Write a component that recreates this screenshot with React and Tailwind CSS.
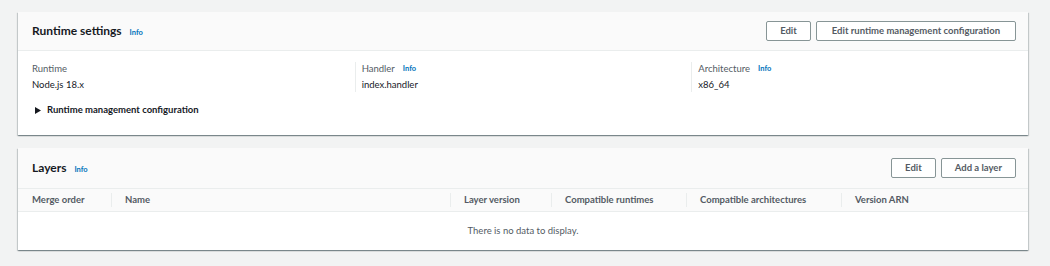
import React from 'react';

const font = { fontFamily: 'Lato, "Open Sans", sans-serif' };

const Info = () => (
  <span className="ml-[8px] text-[7.5px] font-bold text-[#0073bb]">Info</span>
);

const Btn = ({ children, wide }) => (
  <button
    className={`h-[20px] rounded-[2px] border border-[#879596] bg-white ${wide ? 'px-[15px]' : 'px-[13px]'} text-[9.5px] font-bold text-[#545b64]`}
  >
    {children}
  </button>
);

const Field = ({ label, value, info, first }) => (
  <div className={first ? 'pl-[14px]' : 'border-l border-[#eaeded] pl-[6px]'}>
    <div className="flex items-center text-[9.5px] leading-[14px] text-[#545b64]">
      {label}
      {info && <Info />}
    </div>
    <div className="mt-[2px] text-[9.5px] leading-[14px] text-[#16191f]">{value}</div>
  </div>
);

const columns = [
  { name: 'Merge order', w: 'w-[93px]' },
  { name: 'Name', w: 'w-[339px]' },
  { name: 'Layer version', w: 'w-[101px]' },
  { name: 'Compatible runtimes', w: 'w-[135px]' },
  { name: 'Compatible architectures', w: 'w-[155px]' },
  { name: 'Version ARN', w: 'flex-1' },
];

const card =
  'bg-white shadow-[0_1px_1px_0_rgba(0,28,36,0.3),1px_1px_1px_0_rgba(0,28,36,0.15),-1px_1px_1px_0_rgba(0,28,36,0.15)]';

export default function App() {
  return (
    <div className="min-h-[266px] bg-[#f2f3f3] pl-[18px] pr-[22px] pt-[12px]" style={font}>
      {/* Runtime settings */}
      <div className={card}>
        <div className="flex h-[39px] items-center justify-between border-b border-[#eaeded] bg-[#fafafa] pl-[14px] pr-[12px]">
          <div className="flex items-baseline">
            <span className="text-[12px] font-bold text-[#16191f]">Runtime settings</span>
            <Info />
          </div>
          <div className="flex gap-[5px]">
            <Btn>Edit</Btn>
            <Btn wide>Edit runtime management configuration</Btn>
          </div>
        </div>
        <div className="pt-[7px] pb-[18px]">
          <div className="grid grid-cols-3 py-[4px]">
            <Field first label="Runtime" value="Node.js 18.x" />
            <Field label="Handler" value="index.handler" info />
            <Field label="Architecture" value="x86_64" info />
          </div>
          <div className="mt-[7px] flex items-center pl-[17px] text-[9.5px] font-bold text-[#16191f]">
            <svg width="6" height="7" viewBox="0 0 6 7" className="mr-[6px]">
              <path d="M0 0 L6 3.5 L0 7 Z" fill="#16191f" />
            </svg>
            Runtime management configuration
          </div>
        </div>
      </div>

      {/* Layers */}
      <div className={`mt-[13px] ${card}`}>
        <div className="flex h-[40px] items-center justify-between bg-[#fafafa] pl-[14px] pr-[12px]">
          <div className="flex items-baseline">
            <span className="text-[12px] font-bold text-[#16191f]">Layers</span>
            <Info />
          </div>
          <div className="flex gap-[5px]">
            <Btn>Edit</Btn>
            <Btn>Add a layer</Btn>
          </div>
        </div>
        <div className="flex h-[24px] items-center border-y border-[#eaeded] bg-[#fafafa]">
          {columns.map((c, i) => (
            <div key={c.name} className={`${c.w} flex h-full items-center`}>
              {i > 0 && <div className="h-[14px] w-px bg-[#eaeded]" />}
              <span className={`${i > 0 ? 'pl-[13px]' : 'pl-[14px]'} text-[9.5px] font-bold text-[#545b64]`}>
                {c.name}
              </span>
            </div>
          ))}
        </div>
        <div className="flex h-[38px] items-center justify-center text-[9.5px] text-[#545b64]">
          There is no data to display.
        </div>
      </div>
    </div>
  );
}
